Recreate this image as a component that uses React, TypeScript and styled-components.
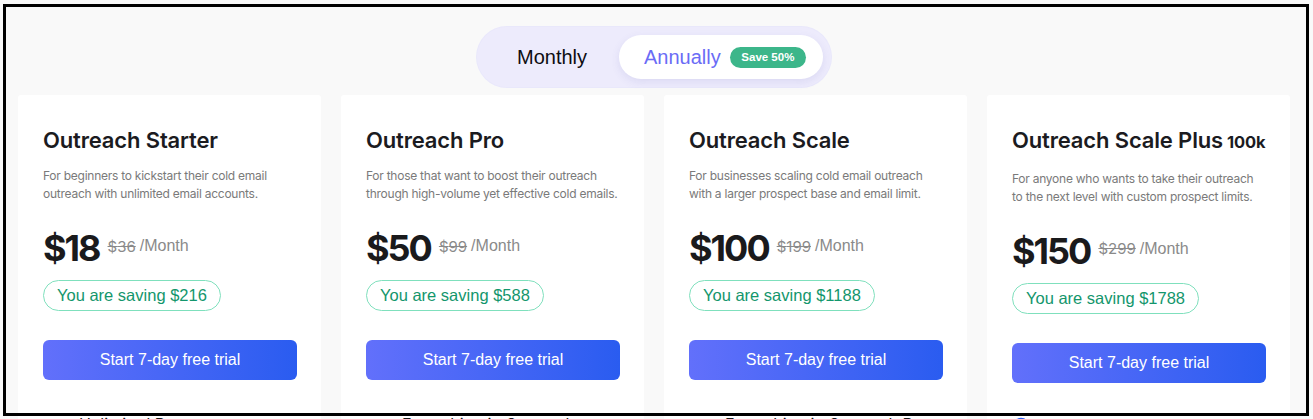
import styled, { createGlobalStyle } from "styled-components";

type Plan = {
  name: string;
  suffix?: string;
  blurb: [string, string];
  price: number;
  was: number;
  saving: number;
  lead: string;
  leadIcon: "check" | "dot" | "circle" | "none";
};

const plans: Plan[] = [
  {
    name: "Outreach Starter",
    blurb: ["For beginners to kickstart their cold email", "outreach with unlimited email accounts."],
    price: 18,
    was: 36,
    saving: 216,
    lead: "Unlimited Prospects",
    leadIcon: "check",
  },
  {
    name: "Outreach Pro",
    blurb: ["For those that want to boost their outreach", "through high-volume yet effective cold emails."],
    price: 50,
    was: 99,
    saving: 588,
    lead: "Everything in Outreach",
    leadIcon: "none",
  },
  {
    name: "Outreach Scale",
    blurb: ["For businesses scaling cold email outreach", "with a larger prospect base and email limit."],
    price: 100,
    was: 199,
    saving: 1188,
    lead: "Everything in Outreach Pro",
    leadIcon: "dot",
  },
  {
    name: "Outreach Scale Plus",
    suffix: "100k",
    blurb: ["For anyone who wants to take their outreach", "to the next level with custom prospect limits."],
    price: 150,
    was: 299,
    saving: 1788,
    lead: "",
    leadIcon: "circle",
  },
];

const GlobalStyle = createGlobalStyle`
  html, body {
    margin: 0;
    background: #f9f9f9;
  }
  body {
    font-family: "Liberation Sans", Arial, sans-serif;
    overflow: hidden;
  }
`;

const Page = styled.div`
  display: flex;
  flex-direction: column;
  align-items: center;
  padding: 27px 23px 0 18px;
  width: 1313px;
  box-sizing: border-box;
`;

const Toggle = styled.div`
  display: flex;
  align-items: center;
  height: 60px;
  box-sizing: border-box;
  padding: 8px;
  border-radius: 30px;
  background: #edebfc;
  box-shadow: 0 0 0 1px #e9e8fb;
`;

const Option = styled.div<{ $active?: boolean }>`
  display: flex;
  align-items: center;
  justify-content: center;
  gap: 9px;
  height: 44px;
  box-sizing: border-box;
  font-size: 20px;
  color: ${(p) => (p.$active ? "#6a6cf6" : "#0d0d12")};
  background: ${(p) => (p.$active ? "#ffffff" : "transparent")};
  border-radius: 22px;
  width: ${(p) => (p.$active ? "204px" : "134px")};
  padding: ${(p) => (p.$active ? "0 17px 0 25px" : "0")};
  box-shadow: ${(p) => (p.$active ? "0 3px 8px rgba(90, 90, 180, 0.12)" : "none")};
`;

const SaveBadge = styled.span`
  display: inline-flex;
  align-items: center;
  justify-content: center;
  width: 78px;
  height: 21px;
  border-radius: 11px;
  background: #3cb68a;
  color: #ffffff;
  font-size: 11.5px;
  font-weight: 700;
`;

const Plans = styled.div`
  display: grid;
  grid-template-columns: repeat(4, 303px);
  gap: 20px;
  width: 1272px;
  margin-top: 8px;
`;

const Card = styled.div`
  background: #ffffff;
  border-radius: 3px;
  padding: 33px 24px 40px 25px;
  min-width: 0;
`;

const Title = styled.h3<{ $extra?: boolean }>`
  margin: 0 0 ${(p) => (p.$extra ? "16.5px" : "14px")};
  font-family: Inter, "Noto Sans", sans-serif;
  font-size: 22px;
  font-weight: 600;
  line-height: 25px;
  letter-spacing: -0.15px;
  color: #1b1b1f;
  white-space: nowrap;
`;

const Suffix = styled.span`
  margin-left: 4px;
  font-size: 16.5px;
  font-weight: 700;
  line-height: 0;
`;

const Blurb = styled.p`
  margin: 0;
  font-family: Inter, "Noto Sans", sans-serif;
  font-size: 12px;
  line-height: 18px;
  letter-spacing: -0.25px;
  color: #7a7a7a;
  white-space: nowrap;
`;

const PriceRow = styled.div`
  display: flex;
  align-items: center;
  margin-top: 26px;
  height: 38px;
`;

const Price = styled.span`
  font-family: Inter, "Noto Sans", sans-serif;
  font-size: 36px;
  font-weight: 700;
  letter-spacing: -2px;
  color: #1a1a1c;
  margin-right: 8px;
`;

const Was = styled.span`
  font-family: Inter, "Noto Sans", sans-serif;
  font-size: 15px;
  color: #8a8a8a;
  text-decoration: line-through;
  margin-right: 4px;
  margin-top: -4px;
`;

const Per = styled.span`
  font-size: 16px;
  color: #8a8a8a;
  margin-top: -4px;
`;

const Saving = styled.div`
  display: inline-flex;
  align-items: center;
  height: 31px;
  box-sizing: border-box;
  margin-top: 13px;
  padding: 0 13px;
  border: 1px solid #7fe0bd;
  border-radius: 16px;
  font-size: 16.5px;
  color: #13966c;
`;

const TrialButton = styled.button`
  display: block;
  width: 100%;
  height: 40px;
  margin-top: 29px;
  border: none;
  border-radius: 6px;
  background: linear-gradient(90deg, #6270fb 0%, #2a5cf0 100%);
  color: #ffffff;
  font-family: "Liberation Sans", Arial, sans-serif;
  font-size: 16px;
  cursor: pointer;
`;

const Features = styled.ul`
  list-style: none;
  margin: 34px 0 0;
  padding: 0 0 0 14px;
`;

const Feature = styled.li`
  display: flex;
  align-items: center;
  gap: 8px;
  font-family: Inter, "Noto Sans", sans-serif;
  font-size: 16px;
  line-height: 20px;
  color: #1a1a1c;
`;

const Frame = styled.div`
  position: fixed;
  left: 3px;
  top: 4px;
  width: 1306px;
  height: 412px;
  box-sizing: border-box;
  border: 3px solid #000000;
  pointer-events: none;
`;

const LeadIcon = ({ kind }: { kind: Plan["leadIcon"] }) => {
  if (kind === "check")
    return (
      <svg width="14" height="14" viewBox="0 0 14 14">
        <path d="M2 7.5l3 3 7-7" fill="none" stroke="#1a1a1c" strokeWidth="1.6" />
      </svg>
    );
  if (kind === "dot")
    return (
      <svg width="14" height="14" viewBox="0 0 14 14">
        <circle cx="7" cy="7" r="1.5" fill="#555" />
      </svg>
    );
  if (kind === "circle")
    return (
      <svg width="18" height="18" viewBox="0 0 18 18" style={{ marginLeft: -14 }}>
        <circle cx="9" cy="9" r="7.5" fill="none" stroke="#2a5cf0" strokeWidth="1.5" />
        <path d="M7 7v3M11 7v3" stroke="#2a5cf0" strokeWidth="1.3" />
      </svg>
    );
  return <svg width="14" height="14" viewBox="0 0 14 14" />;
};

export default function App() {
  return (
    <>
      <GlobalStyle />
      <Page>
        <Toggle>
          <Option>Monthly</Option>
          <Option $active>
            Annually
            <SaveBadge>Save 50%</SaveBadge>
          </Option>
        </Toggle>
        <Plans>
          {plans.map((plan) => (
            <Card key={plan.name}>
              <Title $extra={!!plan.suffix}>
                {plan.name}
                {plan.suffix && <Suffix>{plan.suffix}</Suffix>}
              </Title>
              <Blurb>
                {plan.blurb[0]}
                <br />
                {plan.blurb[1]}
              </Blurb>
              <PriceRow>
                <Price>${plan.price}</Price>
                <Was>${plan.was}</Was>
                <Per>/Month</Per>
              </PriceRow>
              <Saving>You are saving ${plan.saving}</Saving>
              <TrialButton>Start 7-day free trial</TrialButton>
              <Features>
                <Feature>
                  <LeadIcon kind={plan.leadIcon} />
                  {plan.lead}
                </Feature>
              </Features>
            </Card>
          ))}
        </Plans>
      </Page>
      <Frame />
    </>
  );
}
